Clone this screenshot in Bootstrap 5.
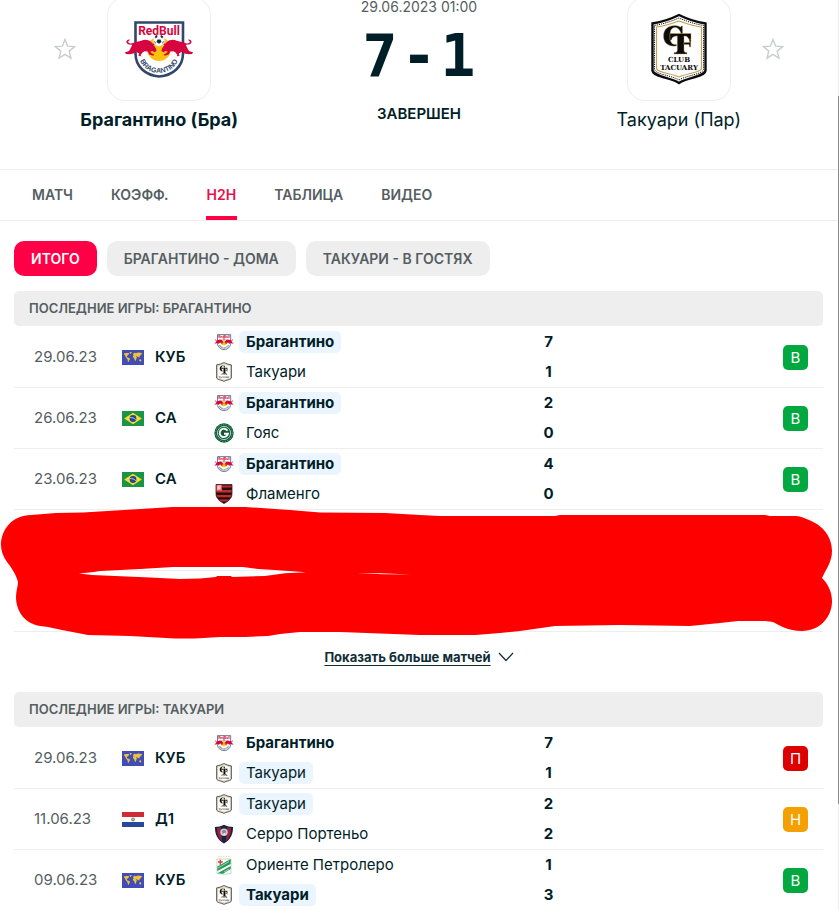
<!DOCTYPE html>
<html lang="ru">
<head>
<meta charset="utf-8">
<meta name="viewport" content="width=device-width, initial-scale=1">
<title>Брагантино - Такуари H2H</title>
<link href="https://cdn.jsdelivr.net/npm/bootstrap@5.3.0/dist/css/bootstrap.min.css" rel="stylesheet">
<style>
  body { font-family: Inter, "Noto Sans", sans-serif; font-size: 15px; color: #001e28; background: #fff; overflow-x: hidden; }
  .page-wrap { border-right: 1px solid #eee; }
  .scroll-thumb { position: absolute; right: -1px; top: 96px; width: 1px; height: 708px; background: #8b8b8b; }
  .duel { height: 169px; overflow: hidden; }
  .duel-side { flex: 0 0 38%; }
  .crest-row { gap: 31px; margin-top: -3px; }
  .star-btn, .star-gap { width: 22px; }
  .star-btn { border: 0; background: none; padding: 0; line-height: 0; }
  .crest-box { width: 104px; height: 104px; border: 1px solid #eee; border-radius: 18px; }
  .team-title { font-size: 18px; line-height: 24px; margin-top: 7px; color: #001e28; }
  .kickoff { font-size: 14px; line-height: 20px; margin-top: -3px; color: #555e61; }
  .result-line { font-family: "DejaVu Sans Mono", monospace; font-weight: 700; font-size: 58px; line-height: 60px; margin-top: 9px; gap: 4px; color: #001e28; }
  .status { font-size: 15px; line-height: 20px; font-weight: 600; margin-top: 18px; }
  .tabs { border-top: 1px solid #eee; border-bottom: 1px solid #eee; padding-left: 31px; gap: 36px; font-size: 14px; font-weight: 600; }
  .tabs a { color: #555e61; text-decoration: none; line-height: 50px; height: 50px; padding: 0 1px; }
  .tabs a.current { color: #e8104a; box-shadow: inset 0 -4px #ff0046; }
  .pad-x { padding-left: 14px; padding-right: 15px; }
  .filters { padding-top: 20px; padding-bottom: 15px; gap: 10px; }
  .pill { border: 0; border-radius: 10px; height: 35px; padding: 0 17px; background: #eee; color: #555e61; font-size: 14px; font-weight: 600; }
  .pill.chosen { background: #ff0046; color: #fff; }
  .section-title { background: #eee; border-radius: 5px; font-size: 13px; line-height: 35px; font-weight: 600; color: #555e61; padding-left: 15px; margin: 0 0 1px; }
  .games { table-layout: fixed; width: 100%; border-collapse: separate; border-spacing: 0; }
  .games td { padding: 0; height: 61px; vertical-align: middle; border-bottom: 1px solid #eee; }
  .games.open-end tr:last-child td { border-bottom: 0; height: 60px; }
  .c-date { width: 108px; } .c-comp { width: 92px; } .c-team { width: 40%; } .c-goal { width: 22px; }
  .games .day { padding-left: 20px; color: #555e61; }
  .comp { gap: 11px; font-weight: 600; }
  .side { height: 30px; gap: 5px; }
  .side svg { width: 20px; height: 20px; flex: none; }
  .side span { line-height: 22px; padding: 0 7px; border-radius: 5px; }
  .side .own { background: #ebf5ff; }
  .goal { line-height: 30px; font-weight: 700; text-align: center; }
  .games .res { text-align: right; padding-right: 15px; }
  .mark-box { display: block; margin-left: auto; width: 25px; line-height: 25px; border-radius: 5px; color: #fff; text-align: center; }
  .win { background: #00a83f; } .loss { background: #dc0000; } .draw { background: #f3a000; }
  .hidden-games { position: relative; height: 122px; }
  .hidden-games .blank { height: 61px; border-bottom: 1px solid #eee; }
  .scribble { position: absolute; left: 0; top: -10px; width: 100%; height: 140px; }
  .more-row { height: 60px; padding-top: 15px; }
  .more-link { font-size: 13px; line-height: 20px; font-weight: 700; color: #0f2d37; gap: 7px; text-decoration: none; }
  .more-link span { text-decoration: underline; text-underline-offset: 3px; }
</style>
<script src="https://cdn.jsdelivr.net/npm/bootstrap@5.3.0/dist/js/bootstrap.bundle.min.js" defer></script>
</head>
<body>
<svg width="0" height="0" class="position-absolute" aria-hidden="true">
  <defs>
    <symbol id="bragantino" viewBox="0 0 72 60">
      <path d="M12.500 3.500h47.500v31c0 13-10 22-23.700 23C22.500 56.500 12.500 47.500 12.500 34.500z" fill="#fff" stroke="#30476b" stroke-width="2.600"/>
      <circle cx="36" cy="30" r="12" fill="#fdc20f"/>
      <text x="36" y="15.500" text-anchor="middle" font-family="Roboto, sans-serif" font-weight="700" font-size="12" fill="#d6053f">RedBull</text>
      <g id="bull-l" fill="#d6053f">
        <path d="M6 25.500C2 24.500 3 20 7 20.500L5.800 22C4.500 22.500 5 24 7.500 24.500c2.500 0 4-1.500 6.500-1.700 4-.3 6-2.600 9.500-1.900 3 .2 4.500 1.600 6 3.600l2.200.2-1 1.500 2.300 3.300 .5 2.500-2 1.300-2-1.300-2.200.5 1 1.500 3 1.500-1 1.300-4-1.300-1.500-3-3.300-.2-2 1.300-2 2.400 1 1.300-3-.2.6-2.500-3.300-2.200-2.300 2-4 .8L3 35l-1.200-1.600L6 32l2-3.500 1.300-2.700z"/>
      </g>
      <use href="#bull-l" transform="translate(72 0) scale(-1 1)"/>
      <circle cx="36" cy="21.500" r="5.700" fill="#fff" stroke="#c4c9d3" stroke-width=".5"/>
      <path d="M34.500 20.500h3l1 2.500-2.500 1.800-2.500-1.800zM32 17l2-1 .5 2-2 1.500zM38 16l2 1.200-.5 2.300-2-1.500zM31 22l1.500 1v2zM41 22l-1.500 1v2z" fill="#1b2638"/>
      <path id="ribbon" d="M16 37C19 59.500 53 59.500 56 37" fill="none"/>
      <text font-family="'Liberation Sans Narrow', 'Liberation Sans', sans-serif" font-size="7" font-weight="700" fill="#30476b" text-anchor="middle"><textPath href="#ribbon" startOffset="50%">BRAGANTINO</textPath></text>
    </symbol>
    <symbol id="tacuary" viewBox="0 0 58 72">
      <path d="M2.500 10.500C12 9 20 6.500 29 2c9 4.500 17 7 26.500 8.500v47C54.500 64 37 64.500 29 70 21 64.500 3.500 64 2.500 57.500z" fill="#fff" stroke="#0c0c0c" stroke-width="2.400"/>
      <path d="M4.500 12.500C13 11 21 8.500 29 5c8 3.500 16 6 24.500 7.500v44C52 61.500 36 62.500 29 67 22 62.500 6 61.500 4.500 56.500z" fill="none" stroke="#0c0c0c" stroke-width="1" stroke-dasharray="1.200 1"/>
      <path d="M6.500 14C14 13 22 10.500 29 8c7 2.500 15 5 22.500 6v41.500C50 60 36 60.500 29 64 22 60.500 8 60 6.500 55.500z" fill="none" stroke="#c6a04e" stroke-width="1.200"/>
      <g fill="#0c0c0c" stroke="#c6a04e" stroke-width=".4">
        <path d="M32.500 13v8h-1.300C30 17 28 14.500 25 14.500c-4 0-5 4-5 8.500 0 5 1.500 8.500 5 8.500h1.500V33C18.500 34 13.500 30 13.500 23S18.500 12.500 25 12.500c2.500 0 4 .8 5.500 1.800l.8-1.300z"/>
        <path d="M20 20.500h21v8h-1.500c-.5-3.500-2-5.500-5.500-5.500v14c0 2 .8 2.500 3 2.500V41H24v-1.500c2.500 0 3.300-.5 3.300-2.500V23c-3.500 0-5.300 1-5.800 4H20z"/>
        <path d="M34 29.500h5.500v-3h1.200V34H39.500l-.5-2.500h-5z"/>
      </g>
      <text x="29" y="48.500" text-anchor="middle" font-family="'DejaVu Serif', serif" font-weight="700" font-size="7" fill="#0c0c0c">CLUB</text>
      <text x="29" y="56.500" text-anchor="middle" font-family="'DejaVu Serif', serif" font-weight="700" font-size="7" fill="#0c0c0c">TACUARY</text>
    </symbol>
    <symbol id="goias" viewBox="0 0 20 20">
      <circle cx="10" cy="10" r="9.700" fill="#0c5a38"/><circle cx="10" cy="10" r="8.300" fill="none" stroke="#a9cdbb" stroke-width=".8" stroke-dasharray=".8 1"/>
      <circle cx="10" cy="10" r="6.600" fill="#0c5a38" stroke="#fff" stroke-width=".7"/>
      <path d="M13.500 7.700A4.200 4.200 0 1 0 14 10.800h-4" fill="none" stroke="#fff" stroke-width="1.900"/>
    </symbol>
    <symbol id="flamengo" viewBox="0 0 20 20">
      <clipPath id="fl-clip"><path d="M2 .5h16v9c0 5-4 8-8 10-4-2-8-5-8-10z"/></clipPath>
      <g clip-path="url(#fl-clip)"><path d="M0 0h20v20H0z" fill="#1c1114"/><path d="M0 1.500h20v2H0zM0 6h20v2.500H0zM0 11h20v2.300H0zM0 15.500h20v2H0z" fill="#c62a2c"/><path d="M2 .5h6v6.500H2z" fill="#e4575a"/><path d="M3.500 2h3.500M3.500 4h2.500M4 2v4M6 2.500v3" stroke="#fff" stroke-width=".9"/></g>
      <path d="M2 .5h16v9c0 5-4 8-8 10-4-2-8-5-8-10z" fill="none" stroke="#4b1519" stroke-width=".8"/>
    </symbol>
    <symbol id="cerro" viewBox="0 0 20 20">
      <path d="M1 3C4 3 7 2.500 10 .8c3 1.700 6 2.200 9 2.200.3 7-2.500 13-9 16.500C3.500 16 .7 10 1 3z" fill="#172345"/>
      <path d="M3 4l4-.8 1 14C4.500 14.500 2.800 10 3 4zM17 4l-4-.8-1 14C15.500 14.500 17.200 10 17 4z" fill="#9f1f35"/>
      <circle cx="10" cy="8.300" r="3.700" fill="#c9cdd8"/><path d="M8 7l2-1.300L12 7l-.7 3H8.700z" fill="#7c849c"/><path d="M9.500 9h1.500v2H9.500z" fill="#eee"/>
    </symbol>
    <symbol id="oriente" viewBox="0 0 20 20">
      <path d="M4 1.500h12" stroke="#efe6a8" stroke-width="1.500" stroke-dasharray="1.500 1"/>
      <path d="M3 4h14v14.500l-7 .8-7-.8z" fill="#fff" stroke="#a8c9b5" stroke-width=".7"/>
      <path d="M16.700 4v5L3.300 16v-4.500zM16.700 11v3L9 18.700l-5.500-.4z" fill="#2a9a58"/><path d="M15 6.500L4 13M15 14l-5 3" stroke="#d7eee0" stroke-width=".7"/>
      <path d="M6.300 4.700v5M4 7h4.800" stroke="#d83b45" stroke-width="1.400"/>
    </symbol>
    <symbol id="world" viewBox="0 0 22 15">
      <path d="M0 0h22v15H0z" fill="#3f4db5"/>
      <path d="M2 3.600l2-.7 2.500.2.800.7L6.200 5l-1 .8-.5 1 .9.700 1.600.5.900.9-.7 1.200-.9 1.900-.6-.2-.3-2.300-.7-1.100L3.700 7 3 5.200 2 4.600zM7.500 2.300l2.200-.2-.5 1.400-1 .6zM11 4.400l.8-1.300 1.200-.4.800.6 2.200-.7 2.500.2 1.800.7-.3.7-1.200.2-.4 1.300-.9.800-.4 1.300-.7-.9-.5-.6-.5 1.200-.6-1.200-.9-.2.900 1.100-.4 1.500-.6 1.900-.8.300-.6-2-.4-1.100-1-.4-.1-1.200.7-.8zM17.300 9.600l1.400-.3.700 1.200-.7.900-1.400-.3z" fill="#f1c13c"/>
    </symbol>
    <symbol id="brazil" viewBox="0 0 22 15">
      <path d="M0 0h22v15H0z" fill="#1c9446"/><path d="M11 1.800l8.800 5.700-8.800 5.700L2.200 7.500z" fill="#f7dd35"/><circle cx="11" cy="7.500" r="3.400" fill="#25488c"/><path d="M8 6.500c2 0 4.500.6 5.800 2.200" stroke="#dce8ee" stroke-width=".8" fill="none"/>
    </symbol>
    <symbol id="paraguay" viewBox="0 0 22 15">
      <path d="M0 0h22v15H0z" fill="#fff"/><path d="M0 0h22v5H0z" fill="#cf2b35"/><path d="M0 10h22v5H0z" fill="#27499b"/><circle cx="11" cy="7.500" r="1.500" fill="#b8b187" stroke="#68764a" stroke-width=".7"/>
    </symbol>
    <symbol id="star" viewBox="0 0 22 22"><path d="M11 1.500l2.600 6.600 7.100.5-5.500 4.500 1.800 7L11 16.300l-6 3.800 1.800-7L1.300 8.600l7.100-.5z" fill="none" stroke="#c8cdcd" stroke-width="1.400"/></symbol>
  </defs>
</svg>

<div class="page-wrap position-relative">
  <div class="scroll-thumb"></div>
  <header class="duel d-flex">
    <div class="duel-side text-center">
      <div class="crest-row d-flex justify-content-center align-items-center">
        <button class="star-btn" aria-label="В избранное"><svg width="22" height="22"><use href="#star"/></svg></button>
        <div class="crest-box d-flex align-items-center justify-content-center"><svg width="72" height="60"><use href="#bragantino"/></svg></div>
        <span class="star-gap"></span>
      </div>
      <div class="team-title fw-bold">Брагантино (Бра)</div>
    </div>
    <div class="flex-fill text-center">
      <div class="kickoff">29.06.2023 01:00</div>
      <div class="result-line d-flex justify-content-center"><span>7</span><span>-</span><span>1</span></div>
      <div class="status">ЗАВЕРШЕН</div>
    </div>
    <div class="duel-side text-center">
      <div class="crest-row d-flex justify-content-center align-items-center">
        <span class="star-gap"></span>
        <div class="crest-box d-flex align-items-center justify-content-center"><svg width="58" height="72"><use href="#tacuary"/></svg></div>
        <button class="star-btn" aria-label="В избранное"><svg width="22" height="22"><use href="#star"/></svg></button>
      </div>
      <div class="team-title">Такуари (Пар)</div>
    </div>
  </header>

  <nav class="tabs d-flex">
    <a href="#">МАТЧ</a><a href="#">КОЭФФ.</a><a href="#" class="current" aria-current="page">H2H</a><a href="#">ТАБЛИЦА</a><a href="#">ВИДЕО</a>
  </nav>

  <div class="filters pad-x d-flex">
    <button class="pill chosen">ИТОГО</button><button class="pill">БРАГАНТИНО - ДОМА</button><button class="pill">ТАКУАРИ - В ГОСТЯХ</button>
  </div>

  <section>
    <div class="pad-x">
      <h2 class="section-title">ПОСЛЕДНИЕ ИГРЫ: БРАГАНТИНО</h2>
      <table class="games">
        <colgroup><col class="c-date"><col class="c-comp"><col class="c-team"><col class="c-goal"><col></colgroup>
        <tbody>
        <tr>
          <td class="day">29.06.23</td>
          <td><div class="comp d-flex align-items-center"><svg width="22" height="15"><use href="#world"/></svg>КУБ</div></td>
          <td><div class="side d-flex align-items-center"><svg><use href="#bragantino"/></svg><span class="own fw-bold">Брагантино</span></div><div class="side d-flex align-items-center"><svg><use href="#tacuary"/></svg><span>Такуари</span></div></td>
          <td><div class="goal">7</div><div class="goal">1</div></td>
          <td class="res"><span class="mark-box win">В</span></td>
        </tr>
        <tr>
          <td class="day">26.06.23</td>
          <td><div class="comp d-flex align-items-center"><svg width="22" height="15"><use href="#brazil"/></svg>СА</div></td>
          <td><div class="side d-flex align-items-center"><svg><use href="#bragantino"/></svg><span class="own fw-bold">Брагантино</span></div><div class="side d-flex align-items-center"><svg><use href="#goias"/></svg><span>Гояс</span></div></td>
          <td><div class="goal">2</div><div class="goal">0</div></td>
          <td class="res"><span class="mark-box win">В</span></td>
        </tr>
        <tr>
          <td class="day">23.06.23</td>
          <td><div class="comp d-flex align-items-center"><svg width="22" height="15"><use href="#brazil"/></svg>СА</div></td>
          <td><div class="side d-flex align-items-center"><svg><use href="#bragantino"/></svg><span class="own fw-bold">Брагантино</span></div><div class="side d-flex align-items-center"><svg><use href="#flamengo"/></svg><span>Фламенго</span></div></td>
          <td><div class="goal">4</div><div class="goal">0</div></td>
          <td class="res"><span class="mark-box win">В</span></td>
        </tr>
        </tbody>
      </table>
    </div>
    <div class="hidden-games pad-x">
      <div class="blank"></div><div class="blank"></div>
      <svg class="scribble" viewBox="0 0 838 140" preserveAspectRatio="none" aria-hidden="true">
        <path fill="#f00" fill-rule="evenodd" d="M1 45C1 29 13 15 31 15L56 13 83 12.500 173 7H245L290 10 320 12.500 385 13 420 15 440 16H555L560 15H765L770 16H795C800 16 804 18 809 20 822 25 832 36 832 51 832 62 826 69 822 78 828 84 832 92 832 101 832 117 820 131 802 131 788 131 779 125 773 122L765 121H738L720 123 690 126 620 125 555 126 520 131 500 133 475 135H420L340 132H300L280 134 268 136 245 137 220 137 195 138.500H175L130 136 88 135 62 130 48 127 40 126C26 124 16 112 16 97 16 91 18 86 18 82 16 74 11 67 7 62 3 56 1 51 1 45z
          M79 73.500L94 72 100 71 140 69 173 67H243L258 69 275 70 306 72.300 285 73.300 265 76 232 77 231 76H217L216 77 200 78.500 180 79 150 77.500 92 75z
          M357 73.500L380 73.200 411 74.500 386 74.200z"/>
      </svg>
    </div>
    <div class="more-row d-flex justify-content-center align-items-start">
      <a class="more-link d-flex align-items-center" href="#"><span>Показать больше матчей</span><svg width="16" height="10" viewBox="0 0 16 10"><path d="M1 1l7 7.500L15 1" fill="none" stroke="#0f2d37" stroke-width="1.200"/></svg></a>
    </div>
  </section>

  <section class="pad-x">
    <h2 class="section-title">ПОСЛЕДНИЕ ИГРЫ: ТАКУАРИ</h2>
    <table class="games open-end">
      <colgroup><col class="c-date"><col class="c-comp"><col class="c-team"><col class="c-goal"><col></colgroup>
      <tbody>
      <tr>
        <td class="day">29.06.23</td>
        <td><div class="comp d-flex align-items-center"><svg width="22" height="15"><use href="#world"/></svg>КУБ</div></td>
        <td><div class="side d-flex align-items-center"><svg><use href="#bragantino"/></svg><span class="fw-bold">Брагантино</span></div><div class="side d-flex align-items-center"><svg><use href="#tacuary"/></svg><span class="own">Такуари</span></div></td>
        <td><div class="goal">7</div><div class="goal">1</div></td>
        <td class="res"><span class="mark-box loss">П</span></td>
      </tr>
      <tr>
        <td class="day">11.06.23</td>
        <td><div class="comp d-flex align-items-center"><svg width="22" height="15"><use href="#paraguay"/></svg>Д1</div></td>
        <td><div class="side d-flex align-items-center"><svg><use href="#tacuary"/></svg><span class="own">Такуари</span></div><div class="side d-flex align-items-center"><svg><use href="#cerro"/></svg><span>Серро Портеньо</span></div></td>
        <td><div class="goal">2</div><div class="goal">2</div></td>
        <td class="res"><span class="mark-box draw">Н</span></td>
      </tr>
      <tr>
        <td class="day">09.06.23</td>
        <td><div class="comp d-flex align-items-center"><svg width="22" height="15"><use href="#world"/></svg>КУБ</div></td>
        <td><div class="side d-flex align-items-center"><svg><use href="#oriente"/></svg><span>Ориенте Петролеро</span></div><div class="side d-flex align-items-center"><svg><use href="#tacuary"/></svg><span class="own fw-bold">Такуари</span></div></td>
        <td><div class="goal">1</div><div class="goal">3</div></td>
        <td class="res"><span class="mark-box win">В</span></td>
      </tr>
      </tbody>
    </table>
  </section>
</div>
</body>
</html>
